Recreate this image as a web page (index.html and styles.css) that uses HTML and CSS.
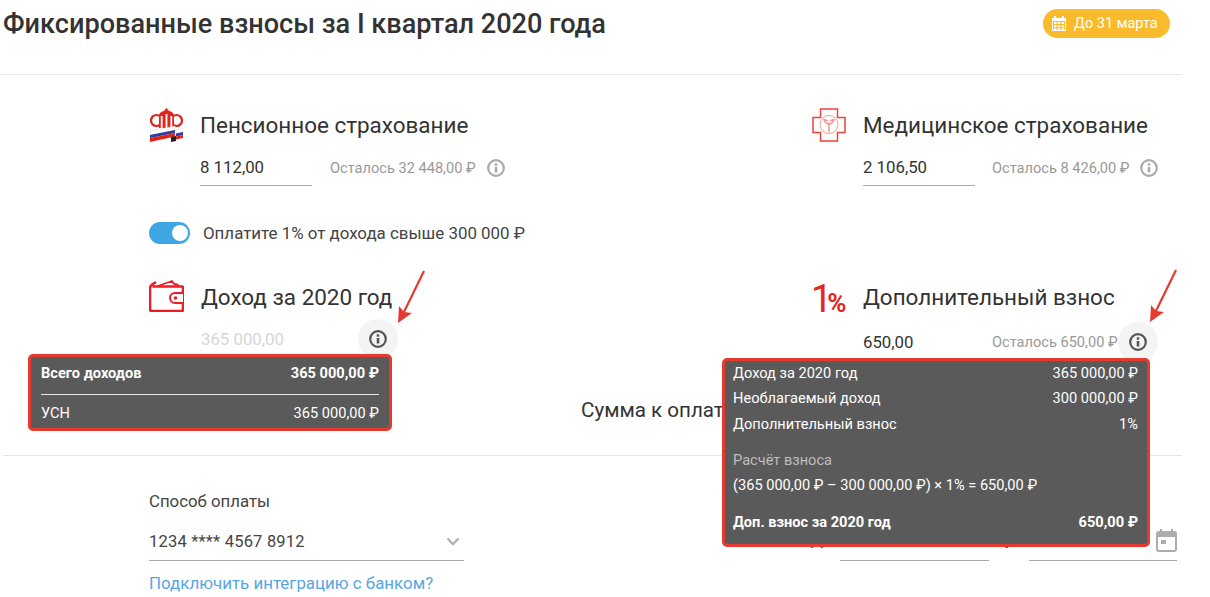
FILE: index.html
```html
<!DOCTYPE html>
<html lang="ru">
<head>
<meta charset="utf-8">
<title>Фиксированные взносы</title>
<link rel="stylesheet" href="styles.css">
</head>
<body>
<div class="page">
  <header class="header">
    <h1 class="title">Фиксированные взносы за I квартал 2020 года</h1>
    <div class="badge">
      <svg class="badge-icon" viewBox="0 0 14 15"><path fill="#fff" d="M2 0h2v2h6V0h2v2h2v13H0V2h2zM1 5v9h12V5zM2 6h2.500v2H2zM5.700 6h2.600v2H5.700zM9.500 6H12v2H9.500zM2 9.200h2.500v2H2zM5.700 9.200h2.600v2H5.700zM9.500 9.200H12v2H9.500zM2 12.200h2.500V14H2zM5.700 12.200h2.600V14H5.700zM9.500 12.200H12V14H9.500z" fill-rule="evenodd"/></svg>
      <span>До 31 марта</span>
    </div>
  </header>

  <main class="main">
    <section class="grid grid-top">
      <div class="sec">
        <div class="sec-head">
          <svg class="ico ico-pfr" viewBox="0 0 33 34">
            <circle cx="6.500" cy="12.500" r="5.500" fill="none" stroke="#e2231a" stroke-width="2.200"/>
            <circle cx="26.500" cy="12.500" r="5.500" fill="none" stroke="#e2231a" stroke-width="2.200"/>
            <path fill="#e2231a" d="M16.500 0l2.500 3c3 .5 4.500 2 5 4.500V20H9V7.500C9.500 5 11 3.500 14 3z"/>
            <path fill="#fff" d="M10.800 8h1.800v12h-1.800zM15.600 6h1.800v14h-1.800zM20.400 8h1.800v12h-1.800z"/>
            <path fill="#fff" stroke="#cfcfd6" stroke-width=".4" d="M0 23l25-5v4L0 27z"/>
            <path fill="#2a3f9d" d="M0 27l25-5v3L0 30z"/>
            <path fill="#e2231a" d="M0 30l25-5v3.500L0 34z"/>
            <path fill="#fff" stroke="#cfcfd6" stroke-width=".4" d="M26 22l7-1.500v3.500l-7 1.500z"/>
            <path fill="#2a3f9d" d="M26 25.500l7-1.500v3l-7 1.500z"/>
            <path fill="#e2231a" d="M26 28.500l7-1.500v3l-7 1.500z"/>
            <path fill="#222" d="M21 29l5-1v5l-5 1z"/>
          </svg>
          <h2 class="sec-title">Пенсионное страхование</h2>
        </div>
        <div class="field-row">
          <div class="field">8 112,00</div>
          <span class="rest">Осталось 32 448,00 ₽</span>
          <svg class="info" viewBox="0 0 18 18"><circle cx="9" cy="9" r="7.800" fill="none" stroke="currentColor" stroke-width="2.200"/><rect x="7.700" y="8" width="2.600" height="5.500" fill="currentColor"/><rect x="7.700" y="4.300" width="2.600" height="2.400" fill="currentColor"/></svg>
        </div>
      </div>
      <div class="sec sec-right">
        <div class="sec-head">
          <svg class="ico ico-cross" viewBox="0 0 34 34">
            <path fill="#fff" stroke="#f0423a" stroke-width="1.500" d="M8.500 1h17v8.500H33v15h-7.500V33h-17v-8.500H1v-15h7.500z"/>
            <circle cx="17" cy="16.500" r="9" fill="none" stroke="#f79a94" stroke-width="1"/>
            <path fill="#f79a94" d="M11 11c3 0 4.500.5 5.200 1.500V24h1.600V12.500C18.500 11.500 20 11 23 11c-.5 2.500-2 5-5.200 6v-1.500c1-.5 2-1.500 2.700-2.800-1.500.2-3.500 1-3.500 2.300 0-1.300-2-2.100-3.500-2.300.7 1.300 1.700 2.300 2.700 2.800V17C13 16 11.500 13.500 11 11z"/>
          </svg>
          <h2 class="sec-title">Медицинское страхование</h2>
        </div>
        <div class="field-row">
          <div class="field">2 106,50</div>
          <span class="rest">Осталось 8 426,00 ₽</span>
          <svg class="info" viewBox="0 0 18 18"><circle cx="9" cy="9" r="7.800" fill="none" stroke="currentColor" stroke-width="2.200"/><rect x="7.700" y="8" width="2.600" height="5.500" fill="currentColor"/><rect x="7.700" y="4.300" width="2.600" height="2.400" fill="currentColor"/></svg>
        </div>
      </div>
    </section>

    <div class="toggle-row">
      <span class="toggle"><span class="knob"></span></span>
      <span class="toggle-label">Оплатите 1% от дохода свыше 300 000 ₽</span>
    </div>

    <section class="grid grid-second">
      <div class="sec">
        <div class="sec-head">
          <svg class="ico ico-wallet" viewBox="0 0 35 32">
            <path fill="none" stroke="#ee1c25" stroke-width="2.600" stroke-linejoin="round" d="M3.500 6.500H33a1 1 0 0 1 1 1V30a1 1 0 0 1-1 1H3a2 2 0 0 1-2-2V8c0-3 3-4 6-6"/>
            <path fill="none" stroke="#ee1c25" stroke-width="1.800" stroke-linejoin="round" d="M9 6l14-5 2 3 3 .5L30 6"/>
            <path fill="#fff" stroke="#ee1c25" stroke-width="2" d="M34 13h-8a4.500 4.500 0 0 0 0 10h8"/>
            <circle cx="26.500" cy="18" r="1.800" fill="#ee1c25"/>
          </svg>
          <h2 class="sec-title">Доход за 2020 год</h2>
        </div>
        <div class="field-row field-row-low">
          <div class="plain muted-value">365 000,00</div>
          <span class="halo"><svg class="info info-dark" viewBox="0 0 18 18"><circle cx="9" cy="9" r="7.800" fill="none" stroke="currentColor" stroke-width="2.200"/><rect x="7.700" y="8" width="2.600" height="5.500" fill="currentColor"/><rect x="7.700" y="4.300" width="2.600" height="2.400" fill="currentColor"/></svg></span>
        </div>
      </div>
      <div class="sec sec-right">
        <div class="sec-head">
          <div class="percent"><span class="p-one">1</span><span class="p-sign">%</span></div>
          <h2 class="sec-title">Дополнительный взнос</h2>
        </div>
        <div class="field-row field-row-low field-row-lower">
          <div class="plain">650,00</div>
          <span class="rest rest-far">Осталось 650,00 ₽</span>
          <span class="halo"><svg class="info info-dark" viewBox="0 0 18 18"><circle cx="9" cy="9" r="7.800" fill="none" stroke="currentColor" stroke-width="2.200"/><rect x="7.700" y="8" width="2.600" height="5.500" fill="currentColor"/><rect x="7.700" y="4.300" width="2.600" height="2.400" fill="currentColor"/></svg></span>
        </div>
      </div>
    </section>

    <div class="total">Сумма к оплате</div>
    <hr class="rule">

    <section class="grid grid-bottom">
      <div class="pay">
        <div class="pay-label">Способ оплаты</div>
        <div class="select">
          <span>1234 **** 4567 8912</span>
          <svg class="chev" viewBox="0 0 14 9"><path fill="none" stroke="#b0b0b0" stroke-width="2.400" d="M1.500 1.500L7 7l5.500-5.500"/></svg>
        </div>
        <a class="link" href="#">Подключить интеграцию с банком?</a>
      </div>
      <div class="dates">
        <div class="date-item date-first"><span class="date-label">Д</span><div class="date-line"></div></div>
        <div class="date-item date-second"><span class="date-label">у</span>
          <div class="date-line">
            <svg class="cal" viewBox="0 0 21 23"><path fill="#adadad" d="M4 0h2v2h9V0h2v2h1a3 3 0 0 1 3 3v15a3 3 0 0 1-3 3H3a3 3 0 0 1-3-3V5a3 3 0 0 1 3-3h1zM2 8v12a1 1 0 0 0 1 1h15a1 1 0 0 0 1-1V8zM5 11h5v4H5z" fill-rule="evenodd"/></svg>
          </div>
        </div>
      </div>
    </section>
  </main>

  <svg class="arrow arrow-left" viewBox="0 0 30 56"><path fill="none" stroke="#e53a30" stroke-width="2.200" d="M28 2L6 47"/><path fill="#e53a30" d="M2 54L3 37l5 6 8 1z"/></svg>
  <svg class="arrow arrow-right" viewBox="0 0 30 56"><path fill="none" stroke="#e53a30" stroke-width="2.200" d="M28 2L6 47"/><path fill="#e53a30" d="M2 54L3 37l5 6 8 1z"/></svg>

  <aside class="tip tip-left">
    <div class="tip-row tip-bold tip-sep"><span>Всего доходов</span><span>365 000,00 ₽</span></div>
    <div class="tip-row tip-usn"><span>УСН</span><span>365 000,00 ₽</span></div>
  </aside>

  <aside class="tip tip-right">
    <div class="tip-row r1"><span>Доход за 2020 год</span><span>365 000,00 ₽</span></div>
    <div class="tip-row r2"><span>Необлагаемый доход</span><span>300 000,00 ₽</span></div>
    <div class="tip-row r3"><span>Дополнительный взнос</span><span>1%</span></div>
    <div class="tip-row r4 tip-gray"><span>Расчёт взноса</span></div>
    <div class="tip-row r5"><span>(365 000,00 ₽ – 300 000,00 ₽) × 1% = 650,00 ₽</span></div>
    <div class="tip-row r6 tip-bold"><span>Доп. взнос за 2020 год</span><span>650,00 ₽</span></div>
  </aside>
</div>
</body>
</html>
```
FILE: styles.css
```css
* { box-sizing: border-box; }
html, body { margin: 0; padding: 0; }
body {
  font-family: Roboto, "Liberation Sans", sans-serif;
  color: #333;
  background: #fff;
  overflow: hidden;
}
.page { position: relative; width: 1210px; height: 597px; overflow: hidden; }

.header {
  width: 1182px;
  height: 75px;
  border-bottom: 1px solid #e4e4e4;
  display: flex;
  justify-content: space-between;
  align-items: flex-start;
  padding: 8px 12px 0 3px;
}
.title { margin: 0; font-size: 27.100px; line-height: 32px; font-weight: 500; color: #333; }
.badge {
  width: 127px;
  height: 29px;
  margin-top: 1px;
  border-radius: 15px;
  background: #f9bb2b;
  color: #fff;
  font-size: 14.500px;
  display: flex;
  align-items: center;
  gap: 8px;
  padding-left: 9px;
}
.badge-icon { width: 14px; height: 15px; }

.main { display: block; }
.grid { display: grid; grid-template-columns: 662px 1fr; padding-left: 149px; }
.grid-top { padding-top: 33px; }
.grid-second { padding-top: 36px; }

.sec-head { display: flex; align-items: center; height: 34px; }
.ico { flex: none; }
.ico-pfr { width: 33px; height: 34px; margin: 0 17px 0 1px; }
.ico-cross { width: 34px; height: 34px; margin: 0 17px 0 1px; }
.ico-wallet { width: 35px; height: 32px; margin: -2px 17px 0 0; }
.sec-title { margin: 0; font-size: 22.450px; line-height: 34px; font-weight: 400; color: #333; }

.field-row { display: flex; align-items: center; height: 44px; padding-left: 52px; padding-top: 8px; }
.grid-top .sec:first-child .field-row { margin-left: -1px; }
.grid-top .sec:first-child .rest { margin-left: 18px; }
.field {
  width: 112px;
  height: 36px;
  line-height: 34px;
  font-size: 16.800px;
  border-bottom: 1px solid #a9a9a9;
}
.rest { margin-left: 17px; font-size: 14.600px; color: #999; white-space: nowrap; }
.info { width: 18px; height: 18px; color: #aaa; margin-left: 11px; flex: none; }
.info-dark { color: #555; margin: 0; }

.field-row-low { height: 40px; padding-left: 52px; padding-top: 0; margin-top: 5px; }
.field-row-lower { margin-top: 8px; }
.plain { font-size: 16.800px; width: 157px; }
.muted-value { color: #d6d6d6; }
.sec-right .plain { width: 112px; }
.halo {
  width: 40px;
  height: 40px;
  border-radius: 50%;
  background: #f4f4f4;
  display: flex;
  align-items: center;
  justify-content: center;
  flex: none;
}
.sec-right .rest-far { width: 126px; }

.toggle-row { display: flex; align-items: center; height: 22px; margin: 36px 0 0 149px; }
.toggle {
  width: 41px;
  height: 22px;
  border-radius: 11px;
  background: #3ea6e3;
  display: flex;
  align-items: center;
  justify-content: flex-end;
  padding-right: 2px;
}
.knob { width: 16px; height: 16px; border-radius: 50%; background: #fff; }
.toggle-label { margin-left: 13px; font-size: 16.900px; color: #444; }

.percent {
  width: 52px;
  height: 34px;
  color: #e2281f;
  flex: none;
  white-space: nowrap;
  display: flex;
  align-items: baseline;
  padding-top: 2px;
  line-height: 34px;
}
.p-one { font-size: 38px; font-weight: 400; letter-spacing: -5px; }
.p-sign { font-size: 26px; font-weight: 700; }

.total { font-size: 20.600px; line-height: 24px; margin: 36px 0 0 581px; color: #333; white-space: nowrap; }
.rule { width: 1179px; height: 1px; border: 0; background: #e4e4e4; margin: 33px 0 0 3px; }

.grid-bottom { padding-top: 35px; }
.pay { width: 315px; }
.pay-label { font-size: 16.800px; line-height: 20px; color: #444; }
.select {
  height: 39px;
  margin-top: 11px;
  font-size: 16.500px;
  letter-spacing: .2px;
  color: #444;
  border-bottom: 1px solid #a9a9a9;
  display: flex;
  align-items: center;
  justify-content: space-between;
  padding-right: 4px;
}
.chev { width: 14px; height: 9px; }
.link { display: block; margin-top: 12px; font-size: 16.900px; color: #58a6e2; text-decoration: none; white-space: nowrap; }

.dates { display: flex; align-self: start; height: 70px; align-items: flex-end; }
.date-item { display: flex; align-items: flex-end; }
.date-label { font-size: 16px; line-height: 20px; padding-bottom: 11px; }
.date-first .date-label { width: 29px; }
.date-second .date-label { width: 24px; margin-left: 16px; }
.date-line { height: 37px; border-bottom: 1px solid #a9a9a9; width: 149px; display: flex; justify-content: flex-end; }
.date-second .date-line { width: 148px; }
.cal { width: 21px; height: 23px; margin-top: 5px; }

.arrow { position: absolute; width: 30px; height: 56px; }
.arrow-left { left: 396px; top: 269px; }
.arrow-right { left: 1148px; top: 268px; }

.tip {
  position: absolute;
  background: #5a5a5a;
  border: 3px solid #e53a30;
  border-radius: 5px;
  color: #fff;
  font-size: 14.600px;
}
.tip-row { display: flex; justify-content: space-between; white-space: nowrap; }
.tip-bold { font-weight: 700; }
.tip-left { left: 28px; top: 354px; width: 364px; height: 77px; padding: 0 10px; }
.tip-sep { height: 38px; padding-top: 7px; line-height: 18px; border-bottom: 1px solid #e8e8e8; }
.tip-usn { line-height: 18px; padding-top: 9px; }
.tip-right { left: 722px; top: 358px; width: 428px; height: 189px; padding: 3px 9px 0 8px; }
.r1, .r2, .r3, .r4, .r5, .r6 { line-height: 18px; }
.r2 { margin-top: 7px; }
.r3 { margin-top: 8px; }
.r4 { margin-top: 18px; }
.tip-gray { color: #bdbdbd; }
.r5 { margin-top: 7px; }
.r6 { margin-top: 19px; }
```
